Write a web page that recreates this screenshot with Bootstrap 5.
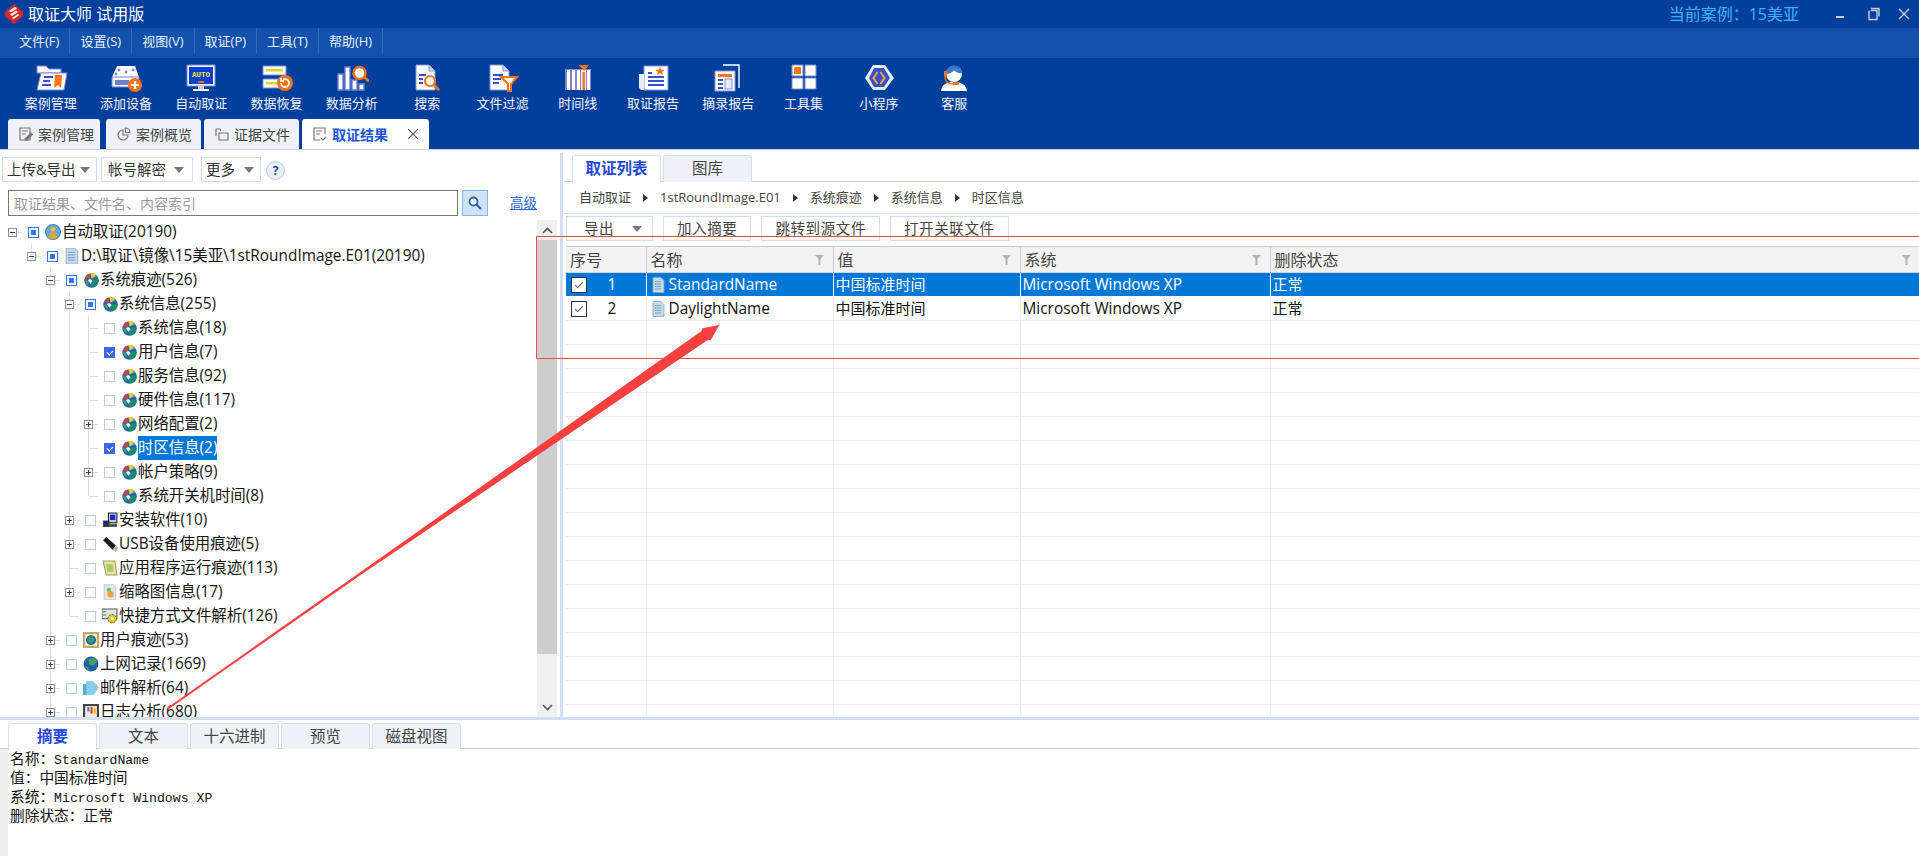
<!DOCTYPE html>
<html lang="zh-CN">
<head>
    <meta charset="UTF-8">
    <meta name="viewport" content="width=device-width, initial-scale=1.0">
    <title>取证大师 试用版</title>
    <link href="https://cdn.jsdelivr.net/npm/bootstrap@5.3.0/dist/css/bootstrap.min.css" rel="stylesheet">
    <style>
        html, body { height: 100%; overflow: hidden; }
        body { font-family: "Open Sans", "Noto Sans CJK SC", sans-serif; font-size: 15px; color: #1a1a1a; background: #fff; }
        .app-shell { height: 856px; width: 1919px; overflow: hidden; }

        .title-bar { height: 28px; background: #00409c; color: #fff; font-size: 16px; }
        .case-name { color: #3fb0f4; font-size: 16px; margin-right: 30px; }
        .win-btns { width: 90px; }
        .menu-bar { height: 30px; background: #1352ac; padding-left: 9px; }
        .menu-item { color: #e8eef8; font-size: 13px; padding: 0 10px; line-height: 26px; border-right: 1px solid #2f69bb; height: 26px; }
        .tool-bar { height: 61px; background: #00409c; padding-left: 13px; }
        .tool-item { width: 75.3px; color: #f2f5fb; font-size: 13px; padding-top: 6px; }
        .tool-label { line-height: 18px; margin-top: 2px; }

        .main-tabs { background: #00409c; height: 31px; padding-left: 8px; border: 0; flex-wrap: nowrap; }
        .main-tabs .nav-link { width: 95px; height: 31px; margin-left: 3px; padding: 0 0 0 11px; background: #eef2f8; border: 0; border-radius: 3px 3px 0 0; color: #444; font-size: 14px; display: flex; align-items: center; gap: 5px; }
        .main-tabs .nav-item:first-child .nav-link { width: 92px; margin-left: 0; }
        .main-tabs .nav-item:nth-child(2) .nav-link { margin-left: 6px; }
        .main-tabs .nav-item:last-child .nav-link { width: 127px; }
        .main-tabs .nav-link.active { background: #fff; color: #1f55d8; font-weight: 700; border: 0; }
        .tab-close { margin-left: 15px; }

        .work-area { height: 568px; border-top: 1px solid #c8cde0; }
        .left-pane { width: 560px; }
        .left-tools { height: 40px; padding: 7px 0 0 2px; }
        .tool-btn { height: 25px; padding: 0 4px; border: 1px solid #d0dcf0; border-radius: 0; font-size: 14.5px; line-height: 1; color: #333; background: #fff; display: flex; align-items: center; justify-content: space-between; }
        .w-upload { width: 95px; margin-right: 4px; }
        .w-account { width: 92px; margin-right: 8px; padding: 0 6px; }
        .w-more { width: 60px; margin-right: 5px; }
        .caret-down { width: 0; height: 0; border-left: 5.5px solid transparent; border-right: 5.5px solid transparent; border-top: 6px solid #777; margin-right: 2px; }
        .help-dot { width: 19px; height: 19px; border-radius: 50%; border: 1px solid #b9cdea; background: #e8eff9; color: #234a9c; font-size: 12px; font-weight: 700; line-height: 17px; text-align: center; }
        .search-row { height: 29px; padding-left: 8px; margin-top: 1px; }
        .search-input { width: 450px; height: 26px; border: 1px solid #777; border-radius: 0; padding: 0 5px; font-size: 14px; }
        .search-input::placeholder { color: #9a9a9a; }
        .search-btn { width: 26px; height: 26px; margin-left: 4px; padding: 0; border: 1px solid #84b4e8; border-radius: 0; background: #cfe2f8; }
        .adv-link { margin: 3px 0 0 22px; font-size: 13.5px; color: #2a66d8; }

        .tree-wrap { height: 497px; margin-top: 2px; }
        .tree-view { width: 537px; padding-left: 3px; overflow: hidden; }
        .tree-row { height: 24px; white-space: nowrap; }
        .tree-cell { width: 19px; height: 24px; flex: none; position: relative; }
        .ln-full { background: linear-gradient(#ddd, #ddd) center / 1px 100% no-repeat; }
        .ln-up { background: linear-gradient(#ddd, #ddd) center top / 1px 12px no-repeat, linear-gradient(#ddd, #ddd) right center / 9px 1px no-repeat; }
        .ln-tee { background: linear-gradient(#ddd, #ddd) center / 1px 100% no-repeat, linear-gradient(#ddd, #ddd) right center / 9px 1px no-repeat; }
        .ln-root { background: linear-gradient(#ddd, #ddd) right center / 9px 1px no-repeat; }
        .exp-box { position: absolute; left: 5px; top: 8px; width: 9px; height: 9px; background: #fff; border: 1px solid #8c8c9c; }
        .exp-box::before { content: ""; position: absolute; left: 1px; top: 3px; width: 5px; height: 1px; background: #2b3f7c; }
        .exp-plus::after { content: ""; position: absolute; left: 3px; top: 1px; width: 1px; height: 5px; background: #2b3f7c; }
        .chk-box { width: 11px; height: 11px; flex: none; margin-left: 6px; border: 1px solid #b9cdf6; position: relative; background: #fff; }
        .chk-mixed { border-color: #3b72f2; }
        .chk-mixed::after { content: ""; position: absolute; left: 2px; top: 2px; width: 5px; height: 5px; background: #3b72f2; }
        .chk-on { background: #3b66ee; border-color: #3b66ee; }
        .chk-on::after { content: ""; position: absolute; left: 3px; top: 1px; width: 4px; height: 6px; border: solid #fff; border-width: 0 1px 1px 0; transform: rotate(45deg); }
        .tree-icon { width: 16px; height: 16px; margin-left: 6px; flex: none; }
        .tree-text { margin-left: 1px; line-height: 24px; height: 24px; font-size: 15.4px; color: #141414; }
        .tree-text.sel { background: #0078d7; color: #fff; }
        .scroll-v { width: 20px; height: 497px; background: #f0f0f0; }
        .scroll-arrow { height: 20px; }
        .scroll-thumb { height: 414px; background: #cdcdcd; }
        .split-v { width: 3px; background: #d3def2; margin-top: 3px; }

        .right-pane { width: 1356px; padding-left: 1px; }
        .sub-tabs { height: 32px; padding: 5px 0 0 8px; border-bottom: 1px solid #c8cde0; flex-wrap: nowrap; }
        .sub-tabs .nav-link { width: 89px; height: 27px; padding: 0; margin-right: 2px; background: #eef2f8; border: 1px solid #d3def2; border-bottom: 0; border-radius: 3px 3px 0 0; color: #444; font-size: 15.5px; text-align: center; line-height: 25px; }
        .sub-tabs .nav-link.active { background: #fff; color: #2448d8; font-weight: 700; border-color: #d3def2; height: 28px; }
        .crumb-bar { height: 32px; padding-left: 15px; border-bottom: 1px solid #d3def2; font-size: 13px; color: #444; }
        .crumb-sep { width: 0; height: 0; margin: 0 12px 0 12px; border-top: 4.5px solid transparent; border-bottom: 4.5px solid transparent; border-left: 5px solid #333; }
        .action-bar { height: 32px; padding: 2px 0 0 2px; gap: 10px; }
        .action-btn { padding: 0 13px; justify-content: center; letter-spacing: .6px; color: #444; font-size: 14.5px; height: 25px; }
        .w-export { width: 87px; justify-content: space-between; padding: 0 8px 0 17px; }

        .result-wrap { height: 470px; padding-left: 2px; overflow: hidden; }
        .result-table { width: 1354px; table-layout: fixed; margin: 0; --bs-table-bg: transparent; }
        .result-table th { height: 26px; padding: 0 3px 0 4px; background: #f2f2f2; border: 0; border-top: 1px solid #c8c8d6; border-bottom: 1px solid #d4d4de; border-right: 1px solid #c8c8d6; font-size: 16px; font-weight: 400; color: #444; position: relative; line-height: 24px; }
        .result-table td { height: 24px; padding: 0 2px; border: 0; border-right: 1px solid #ececec; border-bottom: 1px solid #ececec; font-size: 15.4px; line-height: 23px; white-space: nowrap; color: #111; }
        .result-table td.cjk-cell { font-size: 15px; }
        .result-table tr.row-sel td { background: #0078d7; color: #fff; border-right-color: #fff; border-bottom-color: #fff; }
        .filter-mark { position: absolute; right: 9px; top: 8px; }
        .row-chk { width: 16px; height: 16px; margin: 0 15px 0 3px; border: 1px solid #333; background: #fff; flex: none; }
        .row-num { width: 20px; text-align: center; }
        .doc-small { width: 15px; height: 16px; margin: 0 3px 0 2px; }

        .split-h { height: 3px; background: #d3def2; }
        .bottom-tabs { height: 29px; padding: 3px 0 0 8px; border-bottom: 1px solid #c8cde0; flex-wrap: nowrap; }
        .bottom-tabs .nav-link { width: 89px; height: 26px; padding: 0; margin-right: 2px; background: #eef2f8; border: 1px solid #d3def2; border-bottom: 0; border-radius: 3px 3px 0 0; color: #444; font-size: 15.5px; text-align: center; line-height: 24px; }
        .bottom-tabs .nav-link.active { background: #fff; color: #2448e0; font-weight: 700; height: 27px; border-color: #d3def2; }
        .detail-area { height: 107px; }
        .detail-gutter { width: 8px; background: #eee; }
        .detail-text { padding-left: 2px; font-size: 14.7px; color: #111; }
        .detail-text div { height: 19px; line-height: 19px; }
        .detail-text span { font-family: "Liberation Mono", monospace; font-size: 13.2px; }

        .mark-layer { position: absolute; top: 0; left: 0; pointer-events: none; }
    </style>
</head>
<body>
    <svg width="0" height="0" class="position-absolute">
        <defs>
            <symbol id="t-case" viewBox="0 0 34 28">
                <path d="M3 2h9l3 3h12v4H3z" fill="#fff" stroke="#7c88d4"/>
                <path d="M7 9h26l-3 17H3z" fill="#fff" stroke="#7c88d4"/>
                <path d="M10 13h9M9 17h7M8 21h9" stroke="#3a4fd6" stroke-width="2"/>
                <path d="M21 11h7l-1 13-3-3-4 3z" fill="#ff7a14"/>
            </symbol>
            <symbol id="t-add" viewBox="0 0 34 28">
                <path d="M8 2h18l4 11H3z" fill="#fff"/>
                <path d="M3 13h27v10H3z" fill="#fff" stroke="#6f7fd0"/>
                <path d="M6 16h14v5H6z" fill="#6f7fd0"/>
                <circle cx="10" cy="6" r="1.4" fill="#7c88d4"/><circle cx="24" cy="6" r="1.4" fill="#7c88d4"/><circle cx="7" cy="10" r="1.4" fill="#7c88d4"/><circle cx="17" cy="8" r="1.4" fill="#7c88d4"/>
                <circle cx="26" cy="21" r="7" fill="#ff7410"/>
                <path d="M22 21h8M26 17v8" stroke="#fff" stroke-width="2.2"/>
            </symbol>
            <symbol id="t-auto" viewBox="0 0 34 28">
                <path d="M3 1h28v21H3z" fill="#fff" stroke="#7c88d4"/>
                <path d="M5 3h24v17H5z" fill="#0b3fd2"/>
                <text x="17" y="13" font-size="7.5" font-weight="700" fill="#ffe92a" text-anchor="middle" font-family="Liberation Mono, monospace">AUTO</text>
                <path d="M14 17h6v2h-6z" fill="#ff6a10"/>
                <path d="M14 22h6v3h-6z" fill="#c9d0ec"/><path d="M9 25h16v2H9z" fill="#fff"/>
            </symbol>
            <symbol id="t-recover" viewBox="0 0 34 28">
                <path d="M3 2h23v9H3zM3 15h23v9H3z" fill="#fff" stroke="#7c88d4"/>
                <path d="M6 5h17v2.500H6zM6 18h11v2.500H6z" fill="#d8d821"/>
                <circle cx="25" cy="19" r="8" fill="#ff7410"/>
                <path d="M21 19a4 4 0 1 0 2-3.400M21 14v3h3" fill="none" stroke="#fff" stroke-width="1.800"/>
            </symbol>
            <symbol id="t-analyze" viewBox="0 0 34 28">
                <path d="M3 10h5v16H3zM10 3h5v23h-5zM17 16h5v10h-5zM24 20h5v6h-5z" fill="#fff" stroke="#6f7fd0" stroke-width="1.400"/>
                <circle cx="24.500" cy="9" r="6" fill="#fff" stroke="#ff7410" stroke-width="2.400"/>
                <path d="M29 13l5 4.500" stroke="#ff7410" stroke-width="2.600"/>
            </symbol>
            <symbol id="t-search" viewBox="0 0 34 28">
                <path d="M6 1h13l6 6v19H6z" fill="#fff" stroke="#8793d8"/>
                <path d="M19 1v6h6" fill="#cfd6f2" stroke="#8793d8"/>
                <path d="M9 11h7M9 15h4M9 19h4" stroke="#3a4fd6" stroke-width="2"/>
                <circle cx="20" cy="17" r="5" fill="#fff" stroke="#ff7410" stroke-width="2.200"/>
                <path d="M24 21l5 5" stroke="#ff7410" stroke-width="2.600"/>
            </symbol>
            <symbol id="t-filter" viewBox="0 0 34 28">
                <path d="M5 1h13l6 6v19H5z" fill="#fff" stroke="#8793d8"/>
                <path d="M18 1v6h6" fill="#cfd6f2" stroke="#8793d8"/>
                <path d="M8 11h10M8 15h8M8 19h6" stroke="#3a4fd6" stroke-width="2"/>
                <path d="M16 13h16l-6 7v7h-3v-7z" fill="#fff" stroke="#ff7410" stroke-width="2"/>
            </symbol>
            <symbol id="t-time" viewBox="0 0 34 28">
                <path d="M4 5h26v21H4z" fill="#8088cc"/>
                <path d="M6 6h3v20H6zM11 6h3v20h-3zM16 6h3v20h-3zM26 6h3v20h-3z" fill="#fff"/>
                <path d="M20 6h5v20h-5z" fill="#e9ecf8"/>
                <path d="M21.500 8h2.400v18h-2.400z" fill="#ff7410"/>
                <path d="M17.500 1h10.500l-5 6z" fill="#ff7410"/>
            </symbol>
            <symbol id="t-report" viewBox="0 0 34 28">
                <path d="M8 2h24v24H8z" fill="#fff" stroke="#8793d8"/>
                <path d="M3 10h5v16H5l-2-2z" fill="#e8ebf8"/>
                <path d="M12 9h4M12 13h16M12 17h16M12 21h16" stroke="#3a4fd6" stroke-width="2"/>
                <path d="M24 3l1.400 3h3l-2.300 2 .8 3-2.900-1.700-2.900 1.700.8-3-2.300-2h3z" fill="#ff7410"/>
            </symbol>
            <symbol id="t-extract" viewBox="0 0 34 28">
                <path d="M12 1h16v23" fill="none" stroke="#fff" stroke-width="1.400"/>
                <path d="M4 7h20v20H4z" fill="#fff" stroke="#8793d8"/>
                <path d="M7 10h14v3H7z" fill="#ff7410"/>
                <path d="M7 16h5M7 20h5M7 24h5" stroke="#3a4fd6" stroke-width="1.800"/>
                <path d="M14 15h7v10h-7z" fill="#e7eaf8" stroke="#8793d8"/>
            </symbol>
            <symbol id="t-tools" viewBox="0 0 34 28">
                <path d="M5 1h11v11H5z" fill="#fff" stroke="#7c88d4"/>
                <path d="M7.500 3.500h6v6h-6z" fill="#ff7a00" stroke="#ff7a00"/>
                <path d="M18 1h11v11H18zM5 14h11v11H5zM18 14h11v11H18z" fill="#fff" stroke="#7c88d4"/>
            </symbol>
            <symbol id="t-mini" viewBox="0 0 34 28">
                <path d="M11 1h12l9 13-9 12H11L3 14z" fill="#e6f1ff"/>
                <path d="M12 4h10l6 10-6 9H12L7 14z" fill="#3a4ed0"/>
                <path d="M15.500 8l-4 6 4 6M18.500 8l4 6-4 6" fill="none" stroke="#f5a81c" stroke-width="2"/>
            </symbol>
            <symbol id="t-service" viewBox="0 0 34 28">
                <path d="M4 27c1-7 6-8 10-9h6c4 1 9 2 10 9z" fill="#fff"/>
                <circle cx="17" cy="10" r="8" fill="#fff"/>
                <path d="M9 10a8 8 0 0 1 16-1c-3 1-6-1-8-3-1 2-4 4-8 4z" fill="#3a78cc"/>
                <path d="M7 7h3v6H7z" fill="#ff7410"/>
                <path d="M8 13c0 6 4 7 9 7" fill="none" stroke="#ff7410" stroke-width="1.400"/>
                <path d="M16 18h6v3h-6z" fill="#ff7410"/>
            </symbol>

            <symbol id="n-auto" viewBox="0 0 15 15">
                <circle cx="7.500" cy="7.500" r="7" fill="#6aa7de" stroke="#4d7fb4"/>
                <circle cx="7.500" cy="5" r="2.200" fill="#f4c23c"/>
                <path d="M3.500 13c.5-4 2-5 4-5s3.500 1 4 5c-2 1.400-6 1.400-8 0z" fill="#e8a92a"/>
            </symbol>
            <symbol id="n-doc" viewBox="0 0 15 15">
                <path d="M2 0h8l3 3v12H2z" fill="#c4d8ec" stroke="#8ea7c4" stroke-width=".8"/>
                <path d="M4 4h6M4 6.500h6M4 9h6M4 11.500h6" stroke="#7fa3c6"/>
                <path d="M4 4h1M4 6.500h1M4 9h1" stroke="#6ab56a"/>
            </symbol>
            <symbol id="n-sys" viewBox="0 0 15 15">
                <circle cx="8" cy="8" r="6.800" fill="#1f6aa8"/>
                <path d="M9 14.500a6.800 6.800 0 0 0 5.600-6.500L10 7 7 11z" fill="#1d8a70"/>
                <path d="M2 5l2-3 3 1-1 4z" fill="#d6402c"/>
                <path d="M7 1h4l1 3-4 2z" fill="#f2c83a"/>
                <path d="M4.500 7.500l2.500-1 2 2-2 2.500z" fill="#eef4fa"/>
                <path d="M2 8l2 0 1.500 3-1.500 1z" fill="#48a84e"/>
            </symbol>
            <symbol id="n-install" viewBox="0 0 15 15">
                <path d="M6 1h8v9H6z" fill="#c8c8c8" stroke="#222"/>
                <path d="M7.500 2.500h5v5h-5z" fill="#1428d8"/>
                <path d="M1 8h6v6H1z" fill="#333"/>
                <path d="M2 10h3v2H2z" fill="#1428d8"/>
                <path d="M6 11h8v3H6z" fill="#555"/>
            </symbol>
            <symbol id="n-usb" viewBox="0 0 15 15">
                <path d="M1 4l3-3 9 8-3 4z" fill="#1c1c1c"/>
                <path d="M10 13l3-4 2 2-2 4z" fill="#b8b8b8"/>
            </symbol>
            <symbol id="n-app" viewBox="0 0 15 15">
                <path d="M1 1h11l2 13H4z" fill="#e8e4a0" stroke="#9a9a70"/>
                <path d="M4 4h6l1 7H5z" fill="#a8c860"/>
            </symbol>
            <symbol id="n-thumb" viewBox="0 0 15 15">
                <path d="M2 0h8l3 3v12H2z" fill="#dfe6f2" stroke="#b4c0d4" stroke-width=".8"/>
                <circle cx="6.500" cy="5.500" r="2" fill="#6cb86c"/>
                <circle cx="8" cy="9.500" r="3" fill="#f0a030"/>
            </symbol>
            <symbol id="n-short" viewBox="0 0 15 15">
                <path d="M0 1h14v9H0z" fill="#dfe4ea" stroke="#555"/>
                <path d="M1 3h3v1H1zM1 6h3v1H1z" fill="#3a9a4c"/>
                <circle cx="9.500" cy="10" r="4" fill="#e8c818" stroke="#444" stroke-width=".8" stroke-dasharray="2 1"/>
                <circle cx="9.500" cy="10" r="1.300" fill="#fff"/>
            </symbol>
            <symbol id="n-user" viewBox="0 0 15 15">
                <path d="M0 0h15v15H0z" fill="#c8a860"/>
                <path d="M2 2h11v11H2z" fill="#f4f0e0"/>
                <circle cx="7.500" cy="7.500" r="4.800" fill="#1c6fae"/>
                <path d="M5 5l4-1 2 3-3 4-3-2z" fill="#3ca050"/>
            </symbol>
            <symbol id="n-web" viewBox="0 0 15 15">
                <circle cx="7.500" cy="7.500" r="7" fill="#1f5fae"/>
                <path d="M5 3l6-2 2 4-3 4-4-1zM2 9l3 1 1 4-2-1z" fill="#3e9e60"/>
            </symbol>
            <symbol id="n-mail" viewBox="0 0 15 15">
                <path d="M0 4h3V1h6l6 6-5 7H0z" fill="#86cdea"/>
                <path d="M0 4h3v10H0z" fill="#5aa8d0"/>
            </symbol>
            <symbol id="n-log" viewBox="0 0 15 15">
                <path d="M0 0h15v15H0z" fill="#444"/>
                <path d="M2 2h11v13H2z" fill="#f0ecd8"/>
                <path d="M7 3h2v6H7z" fill="#d83c3c"/><path d="M4 3h2v4H4z" fill="#4878c8"/><path d="M10 4h2v5h-2z" fill="#e8b820"/>
            </symbol>
        </defs>
    </svg>

    <div class="app-shell d-flex flex-column">
        <!-- title -->
        <div class="title-bar d-flex align-items-center">
            <svg width="20" height="20" viewBox="0 0 20 20" class="ms-1 me-1">
                <path d="M10 0l9 8v4l-9 8-9-8V8z" fill="#d4262c"/>
                <path d="M5 7l6-4 2 1.500-6 4zM6 10.500l6-4 2 1.500-6 4zM8 14l6-4 1.500 1-6 4z" fill="#fff"/>
            </svg>
            <span>取证大师 试用版</span>
            <span class="case-name ms-auto">当前案例：15美亚</span>
            <div class="win-btns d-flex align-items-center">
                <svg width="90" height="24" viewBox="0 0 90 24">
                    <path d="M7 14h8v2H7z" fill="#c8ccd4"/>
                    <path d="M42 8.500h6v9h-8v-9M42 6.500h8v8" fill="none" stroke="#c8ccd4" stroke-width="1.400"/>
                    <path d="M70 7l10 10M80 7L70 17" stroke="#c8ccd4" stroke-width="1.400"/>
                </svg>
            </div>
        </div>

        <div class="menu-bar d-flex" id="menuBar"></div>
        <div class="tool-bar d-flex" id="toolBar"></div>

        <ul class="nav nav-tabs main-tabs">
            <li class="nav-item"><a class="nav-link" href="#">
                <svg width="14" height="14" viewBox="0 0 14 14" fill="none" stroke="#777" stroke-width="1.200"><path d="M1 1h10v12H1zM3 4h6M3 7h4"/><path d="M6 12l6-6 1.500 1.500-6 6z" fill="#777"/></svg>案例管理</a></li>
            <li class="nav-item"><a class="nav-link" href="#">
                <svg width="14" height="14" viewBox="0 0 14 14" fill="none" stroke="#777" stroke-width="1.200"><path d="M6 3a5 5 0 1 0 5 5H6z"/><path d="M8.500 1a4.500 4.500 0 0 1 4.500 4.500H8.500z"/></svg>案例概览</a></li>
            <li class="nav-item"><a class="nav-link" href="#">
                <svg width="14" height="14" viewBox="0 0 14 14" fill="none" stroke="#777" stroke-width="1.200"><path d="M1 9V2h4l1 2M4 6h9v7H4z"/></svg>证据文件</a></li>
            <li class="nav-item"><a class="nav-link active" href="#">
                <svg width="14" height="14" viewBox="0 0 14 14" fill="none" stroke="#777" stroke-width="1.200"><path d="M12 7V1H1v12h6M3 4h6M3 7h4M8 11l2 2 3-3"/></svg>取证结果
                <svg class="tab-close" width="10" height="10" viewBox="0 0 10 10"><path d="M0 0l10 10M10 0L0 10" stroke="#555" stroke-width="1.200"/></svg></a></li>
        </ul>

        <div class="work-area d-flex">
            <div class="left-pane d-flex flex-column">
                <div class="left-tools d-flex align-items-start">
                    <button class="btn tool-btn w-upload">上传&amp;导出<i class="caret-down"></i></button>
                    <button class="btn tool-btn w-account">帐号解密<i class="caret-down"></i></button>
                    <button class="btn tool-btn w-more">更多<i class="caret-down"></i></button>
                    <div class="help-dot mt-1">?</div>
                </div>
                <div class="search-row d-flex align-items-start">
                    <input type="text" class="form-control search-input" placeholder="取证结果、文件名、内容索引">
                    <button class="btn search-btn d-flex align-items-center justify-content-center">
                        <svg width="14" height="14" viewBox="0 0 14 14"><circle cx="5.500" cy="5.500" r="4" fill="#fff" stroke="#2f5f9e" stroke-width="1.800"/><path d="M8.500 8.500l4.500 4.500" stroke="#2f5f9e" stroke-width="2.200"/></svg>
                    </button>
                    <a href="#" class="adv-link">高级</a>
                </div>
                <div class="tree-wrap d-flex">
                    <div class="tree-view" id="treeView"></div>
                    <div class="scroll-v d-flex flex-column">
                        <div class="scroll-arrow d-flex align-items-center justify-content-center">
                            <svg width="11" height="7" viewBox="0 0 11 7"><path d="M1 6l4.500-4.500L10 6" fill="none" stroke="#555" stroke-width="1.600"/></svg>
                        </div>
                        <div class="scroll-thumb"></div>
                        <div class="flex-grow-1"></div>
                        <div class="scroll-arrow d-flex align-items-center justify-content-center">
                            <svg width="11" height="7" viewBox="0 0 11 7"><path d="M1 1l4.500 4.500L10 1" fill="none" stroke="#555" stroke-width="1.600"/></svg>
                        </div>
                    </div>
                </div>
            </div>
            <div class="split-v"></div>
            <div class="right-pane d-flex flex-column">
                <ul class="nav sub-tabs">
                    <li class="nav-item"><a class="nav-link active" href="#">取证列表</a></li>
                    <li class="nav-item"><a class="nav-link" href="#">图库</a></li>
                </ul>
                <div class="crumb-bar d-flex align-items-center">
                    <span>自动取证</span><i class="crumb-sep"></i>
                    <span>1stRoundImage.E01</span><i class="crumb-sep"></i>
                    <span>系统痕迹</span><i class="crumb-sep"></i>
                    <span>系统信息</span><i class="crumb-sep"></i>
                    <span>时区信息</span>
                </div>
                <div class="action-bar d-flex align-items-start">
                    <button class="btn tool-btn action-btn w-export">导出<i class="caret-down"></i></button>
                    <button class="btn tool-btn action-btn">加入摘要</button>
                    <button class="btn tool-btn action-btn">跳转到源文件</button>
                    <button class="btn tool-btn action-btn">打开关联文件</button>
                </div>
                <div class="result-wrap">
                    <table class="table result-table">
                        <colgroup>
                            <col width="80"><col width="187"><col width="187"><col width="250"><col width="650">
                        </colgroup>
                        <thead><tr id="resultHead"></tr></thead>
                        <tbody id="resultBody"></tbody>
                    </table>
                </div>
            </div>
        </div>

        <div class="split-h"></div>
        <ul class="nav bottom-tabs">
            <li class="nav-item"><a class="nav-link active" href="#">摘要</a></li>
            <li class="nav-item"><a class="nav-link" href="#">文本</a></li>
            <li class="nav-item"><a class="nav-link" href="#">十六进制</a></li>
            <li class="nav-item"><a class="nav-link" href="#">预览</a></li>
            <li class="nav-item"><a class="nav-link" href="#">磁盘视图</a></li>
        </ul>
        <div class="detail-area d-flex">
            <div class="detail-gutter"></div>
            <div class="detail-text">
                <div>名称：<span>StandardName</span></div>
                <div>值：中国标准时间</div>
                <div>系统：<span>Microsoft Windows XP</span></div>
                <div>删除状态：正常</div>
            </div>
        </div>
    </div>

    <!-- annotation drawn over the screenshot -->
    <svg class="mark-layer" width="1919" height="856" viewBox="0 0 1919 856">
        <path d="M1919 236.500H536.500V358.500H1919" fill="none" stroke="#f44848"/>
        <path d="M167 708L356.300 575L701.500 331L702.500 328.300L719.300 325L710.400 340.700L708.500 339.500L357.700 577L168.500 709.300z" fill="#f84040"/>
    </svg>

    <script>
        const menus = ["文件(F)", "设置(S)", "视图(V)", "取证(P)", "工具(T)", "帮助(H)"];
        document.getElementById("menuBar").innerHTML = menus.map(m => `<div class="menu-item">${m}</div>`).join("");

        const tools = [
            ["t-case", "案例管理"], ["t-add", "添加设备"], ["t-auto", "自动取证"], ["t-recover", "数据恢复"],
            ["t-analyze", "数据分析"], ["t-search", "搜索"], ["t-filter", "文件过滤"], ["t-time", "时间线"],
            ["t-report", "取证报告"], ["t-extract", "摘录报告"], ["t-tools", "工具集"], ["t-mini", "小程序"], ["t-service", "客服"]
        ];
        document.getElementById("toolBar").innerHTML = tools.map(t => `
            <div class="tool-item d-flex flex-column align-items-center">
                <svg width="34" height="28"><use href="#${t[0]}"/></svg>
                <div class="tool-label">${t[1]}</div>
            </div>`).join("");

        // level, expander, check state, icon, text
        const treeRows = [
            [0, "-", "m", "n-auto", "自动取证(20190)"],
            [1, "-", "m", "n-doc", "D:\\取证\\镜像\\15美亚\\1stRoundImage.E01(20190)"],
            [2, "-", "m", "n-sys", "系统痕迹(526)"],
            [3, "-", "m", "n-sys", "系统信息(255)"],
            [4, "", "u", "n-sys", "系统信息(18)"],
            [4, "", "c", "n-sys", "用户信息(7)"],
            [4, "", "u", "n-sys", "服务信息(92)"],
            [4, "", "u", "n-sys", "硬件信息(117)"],
            [4, "+", "u", "n-sys", "网络配置(2)"],
            [4, "", "c", "n-sys", "时区信息(2)", true],
            [4, "+", "u", "n-sys", "帐户策略(9)"],
            [4, "", "u", "n-sys", "系统开关机时间(8)"],
            [3, "+", "u", "n-install", "安装软件(10)"],
            [3, "+", "u", "n-usb", "USB设备使用痕迹(5)"],
            [3, "", "u", "n-app", "应用程序运行痕迹(113)"],
            [3, "+", "u", "n-thumb", "缩略图信息(17)"],
            [3, "", "u", "n-short", "快捷方式文件解析(126)"],
            [2, "+", "u", "n-user", "用户痕迹(53)"],
            [2, "+", "u", "n-web", "上网记录(1669)"],
            [2, "+", "u", "n-mail", "邮件解析(64)"],
            [2, "+", "u", "n-log", "日志分析(680)"]
        ];
        const hasLaterSibling = (i, col) => {
            for (let j = i + 1; j < treeRows.length; j++) {
                if (treeRows[j][0] < col) return false;
                if (treeRows[j][0] === col) return true;
            }
            return col === 2; // 列表后面还有节点
        };
        document.getElementById("treeView").innerHTML = treeRows.map((r, i) => {
            const [level, exp, chk, icon, text, sel] = r;
            let cells = "";
            for (let c = 0; c < level; c++) {
                cells += `<div class="tree-cell ${hasLaterSibling(i, c) ? "ln-full" : ""}"></div>`;
            }
            const own = level === 0 ? "ln-root" : (hasLaterSibling(i, level) ? "ln-tee" : "ln-up");
            const box = exp ? `<i class="exp-box ${exp === "+" ? "exp-plus" : ""}"></i>` : "";
            const chkClass = chk === "m" ? "chk-mixed" : (chk === "c" ? "chk-on" : "");
            return `<div class="tree-row d-flex align-items-center">
                ${cells}<div class="tree-cell ${own}">${box}</div>
                <i class="chk-box ${chkClass}"></i>
                <svg class="tree-icon"><use href="#${icon}"/></svg>
                <span class="tree-text ${sel ? "sel" : ""}">${text}</span>
            </div>`;
        }).join("");

        const funnel = `<svg class="filter-mark" width="9" height="10" viewBox="0 0 9 10"><path d="M0 0h9L5.500 4v6h-2V4z" fill="#b4b4b4"/></svg>`;
        document.getElementById("resultHead").innerHTML =
            ["序号", "名称", "值", "系统", "删除状态"].map((h, i) => `<th>${h}${i ? funnel : ""}</th>`).join("");

        const results = [["1", "StandardName"], ["2", "DaylightName"]];
        let body = results.map((r, i) => `
            <tr class="${i === 0 ? "row-sel" : ""}">
                <td><div class="d-flex align-items-center">
                    <svg class="row-chk" viewBox="0 0 16 16"><path d="M3.500 8l3 3 6-6.500" fill="none" stroke="#777" stroke-width="1.300"/></svg>
                    <span class="row-num">${r[0]}</span></div></td>
                <td><div class="d-flex align-items-center"><svg class="doc-small"><use href="#n-doc"/></svg>${r[1]}</div></td>
                <td class="cjk-cell">中国标准时间</td>
                <td>Microsoft Windows XP</td>
                <td class="cjk-cell">正常</td>
            </tr>`).join("");
        for (let i = 0; i < 17; i++) {
            body += "<tr><td></td><td></td><td></td><td></td><td></td></tr>";
        }
        document.getElementById("resultBody").innerHTML = body;
    </script>
    <script src="https://cdn.jsdelivr.net/npm/bootstrap@5.3.0/dist/js/bootstrap.bundle.min.js"></script>
</body>
</html>
